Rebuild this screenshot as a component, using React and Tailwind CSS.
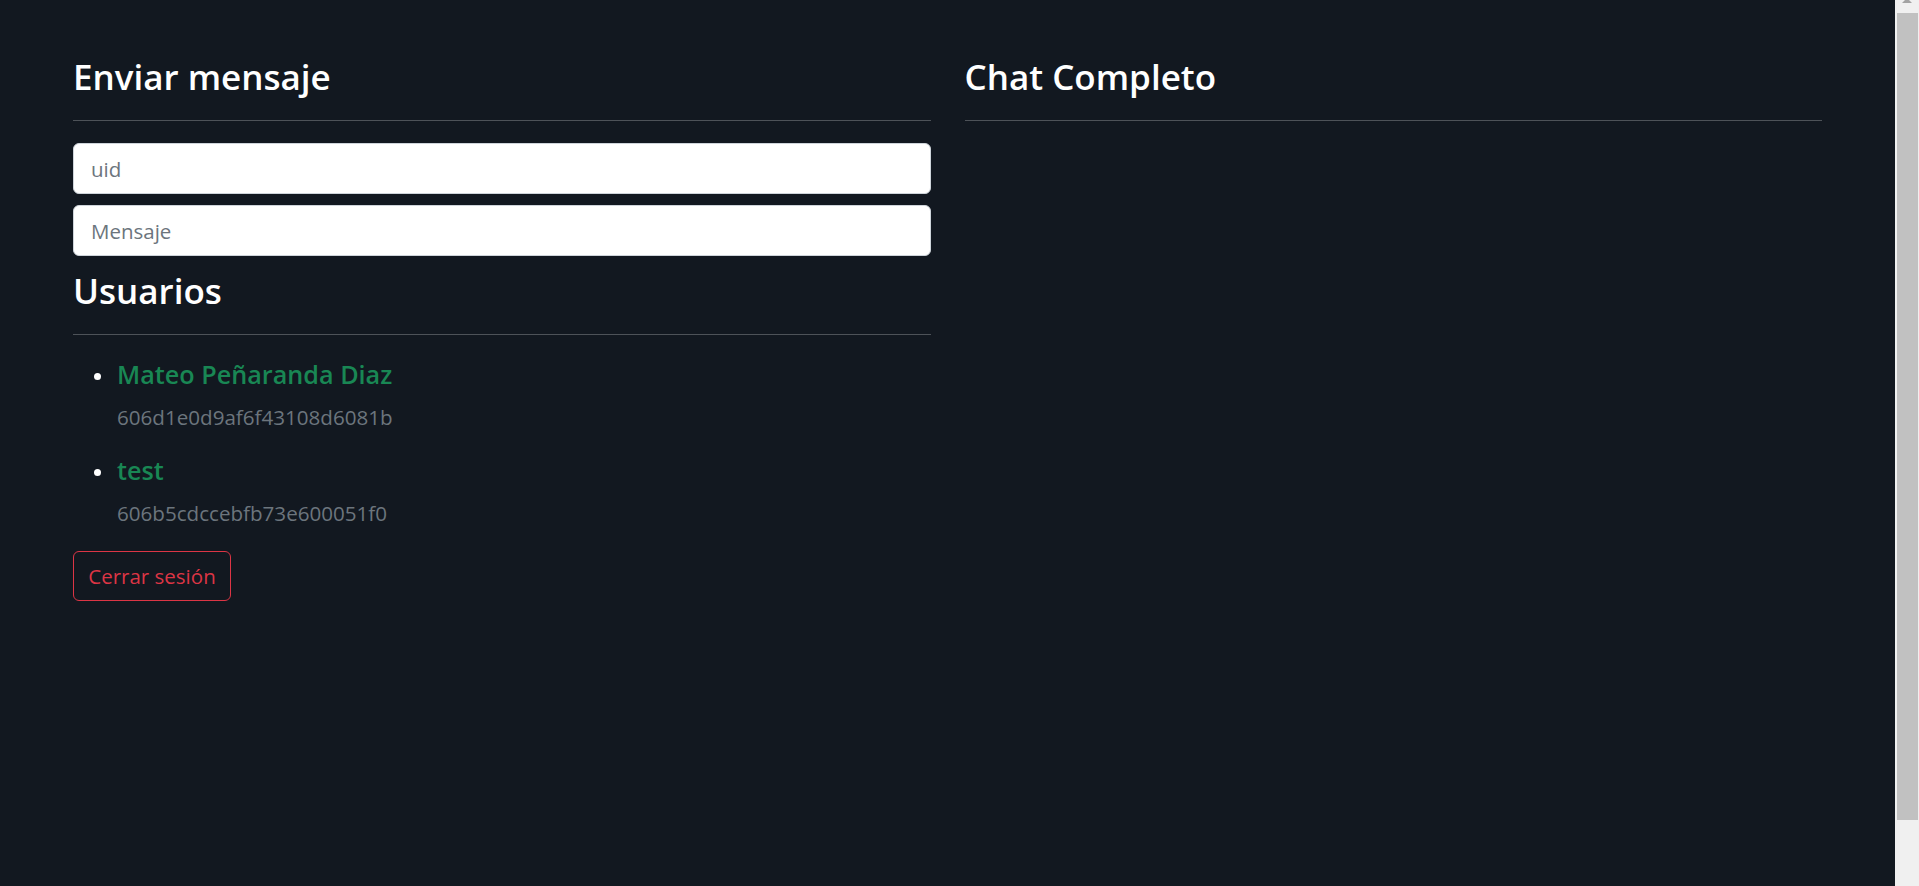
import React from "react";

const users = [
  { name: "Mateo Peñaranda Diaz", uid: "606d1e0d9af6f43108d6081b" },
  { name: "test", uid: "606b5cdccebfb73e600051f0" },
];

const Heading = ({ children, className = "" }) => (
  <h2 className={`text-[35px] leading-[42px] font-semibold text-white ${className}`}>
    {children}
  </h2>
);

const Divider = () => <div className="h-px bg-[#4d5258] mt-[22px]" />;

const App = () => {
  return (
    <div className="flex h-[886px] overflow-hidden bg-[#121820] font-['Open_Sans',sans-serif]">
      <main className="flex-1 grid grid-cols-2 gap-x-[34px] items-start px-[73px] pt-[56px]">
        {/* Left column */}
        <section className="flex flex-col">
          <Heading>Enviar mensaje</Heading>
          <Divider />

          <input
            type="text"
            placeholder="uid"
            className="mt-[22px] h-[51px] w-full rounded-[6px] border border-[#ced4da] bg-white px-[17px] text-[20.5px] text-[#212529] placeholder:text-[#6c757d] outline-none"
          />
          <input
            type="text"
            placeholder="Mensaje"
            className="mt-[11px] h-[51px] w-full rounded-[6px] border border-[#ced4da] bg-white px-[17px] text-[20.5px] text-[#212529] placeholder:text-[#6c757d] outline-none"
          />

          <Heading className="mt-[14px]">Usuarios</Heading>
          <Divider />

          <ul className="mt-[24px] flex flex-col gap-[23px]">
            {users.map((u) => (
              <li key={u.uid} className="flex">
                <span className="mt-[14px] ml-[21px] mr-[16px] h-[7px] w-[7px] shrink-0 rounded-full bg-white" />
                <div className="flex flex-col gap-[13px]">
                  <span className="text-[25.2px] leading-[30px] font-semibold text-[#198754]">
                    {u.name}
                  </span>
                  <span className="text-[20.6px] leading-[30px] text-[#6c757d]">{u.uid}</span>
                </div>
              </li>
            ))}
          </ul>

          <button
            type="button"
            className="mt-[23px] flex h-[50px] w-[158px] items-center justify-center rounded-[6px] border border-[#dc3545] text-[20.5px] text-[#dc3545]"
          >
            Cerrar sesión
          </button>
        </section>

        {/* Right column */}
        <section className="flex flex-col">
          <Heading>Chat Completo</Heading>
          <Divider />
        </section>
      </main>

      {/* scrollbar */}
      <aside className="flex w-[24px] shrink-0 flex-col bg-[#f0f0f0]">
        <svg width="24" height="13" viewBox="0 0 24 13" className="shrink-0">
          <polygon points="7,3 17,3 12,-2" fill="#a3a3a3" />
        </svg>
        <div className="ml-[2px] mr-[1px] h-[807px] bg-[#c1c1c1]" />
      </aside>
    </div>
  );
};

export default App;
